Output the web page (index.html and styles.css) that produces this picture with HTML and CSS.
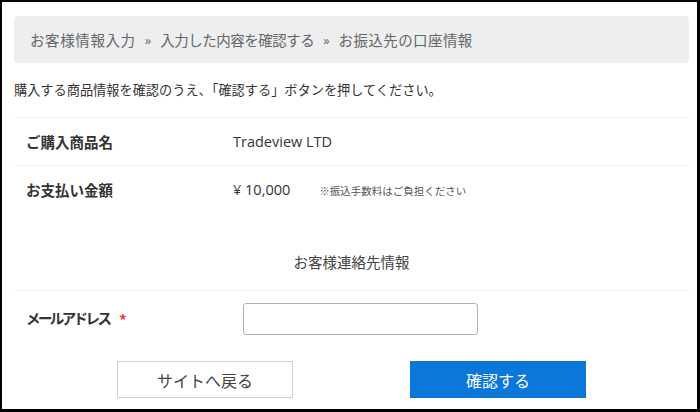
FILE: index.html
```html
<!DOCTYPE html>
<html lang="ja">
<head>
<meta charset="utf-8">
<title>お振込先の口座情報</title>
<link rel="stylesheet" href="styles.css">
</head>
<body>
<div class="frame">
  <nav class="crumbs">
    <span class="crumb-a">お客様情報入力</span><span class="sep">»</span><span class="crumb-b">入力した内容を確認する</span><span class="sep">»</span><span class="crumb-c">お振込先の口座情報</span>
  </nav>
  <p class="intro">購入する商品情報を確認のうえ、「確認する」ボタンを押してください。</p>
  <div class="row">
    <div class="label">ご購入商品名</div>
    <div class="value">Tradeview LTD</div>
  </div>
  <div class="row">
    <div class="label">お支払い金額</div>
    <div class="value">¥ 10,000<span class="note">※振込手数料はご負担ください</span></div>
  </div>
  <h2 class="section">お客様連絡先情報</h2>
  <div class="row form-row">
    <label class="label form-label" for="email">メールアドレス<span class="req">*</span></label>
    <input class="field" id="email" type="email">
  </div>
  <div class="actions">
    <button class="btn btn-back" type="button">サイトへ戻る</button>
    <button class="btn btn-confirm" type="button">確認する</button>
  </div>
</div>
</body>
</html>
```
FILE: styles.css
```css
* { box-sizing: border-box; }
html, body { margin: 0; padding: 0; background: #fff; }
body {
  font-family: "Open Sans", "Noto Sans CJK JP", sans-serif;
  color: #333;
}
.frame {
  width: 700px;
  height: 412px;
  border: 2px solid #000;
  border-right-width: 3px;
  border-bottom-width: 3px;
  padding: 14px 8px 0 12px;
  overflow: hidden;
}
.crumbs {
  height: 47px;
  background: #eceef0;
  border-radius: 4px;
  padding-left: 16px;
  display: flex;
  align-items: center;
  font-size: 14.5px;
  color: #666;
}
.crumbs .sep {
  margin: 0 9px;
  font-size: 13px;
}
.crumb-a { letter-spacing: 0.6px; }
.crumb-b { letter-spacing: -0.5px; }
.crumb-c { letter-spacing: 0.4px; }
.intro {
  margin: 0;
  line-height: 54px;
  font-size: 13.2px;
  color: #333;
}
.row {
  display: flex;
  align-items: center;
  height: 48px;
  border-top: 1px solid #efefef;
  padding-left: 12px;
}
.label {
  width: 207px;
  font-weight: bold;
  font-size: 14.5px;
  color: #333;
}
.value {
  font-size: 14.5px;
  color: #333;
}
.note {
  font-size: 10.5px;
  color: #555;
  margin-left: 29px;
}
.section {
  margin: 0;
  padding: 37px 0 14px;
  line-height: 26px;
  text-align: center;
  font-size: 14.5px;
  font-weight: normal;
  color: #444;
}
.form-row {
  height: auto;
  padding-top: 12px;
  padding-bottom: 12px;
}
.form-label {
  width: 217px;
  padding-bottom: 4px;
  letter-spacing: -2.6px;
}
.req {
  color: #d9363e;
  margin-left: 10px;
  letter-spacing: 0;
  font-size: 13px;
}
.field {
  width: 235px;
  height: 32px;
  border: 1px solid #b3b3b3;
  border-radius: 3px;
  background: #fff;
}
.actions {
  display: flex;
  justify-content: center;
  gap: 117px;
  margin-top: 14px;
}
.btn {
  width: 176px;
  height: 37px;
  font-family: inherit;
  font-size: 16px;
  border-radius: 0;
  cursor: pointer;
}
.btn-back {
  background: #fff;
  border: 1px solid #cfcfcf;
  color: #444;
}
.btn-confirm {
  background: #0b77d9;
  border: 1px solid #0b77d9;
  color: #fff;
}
```
